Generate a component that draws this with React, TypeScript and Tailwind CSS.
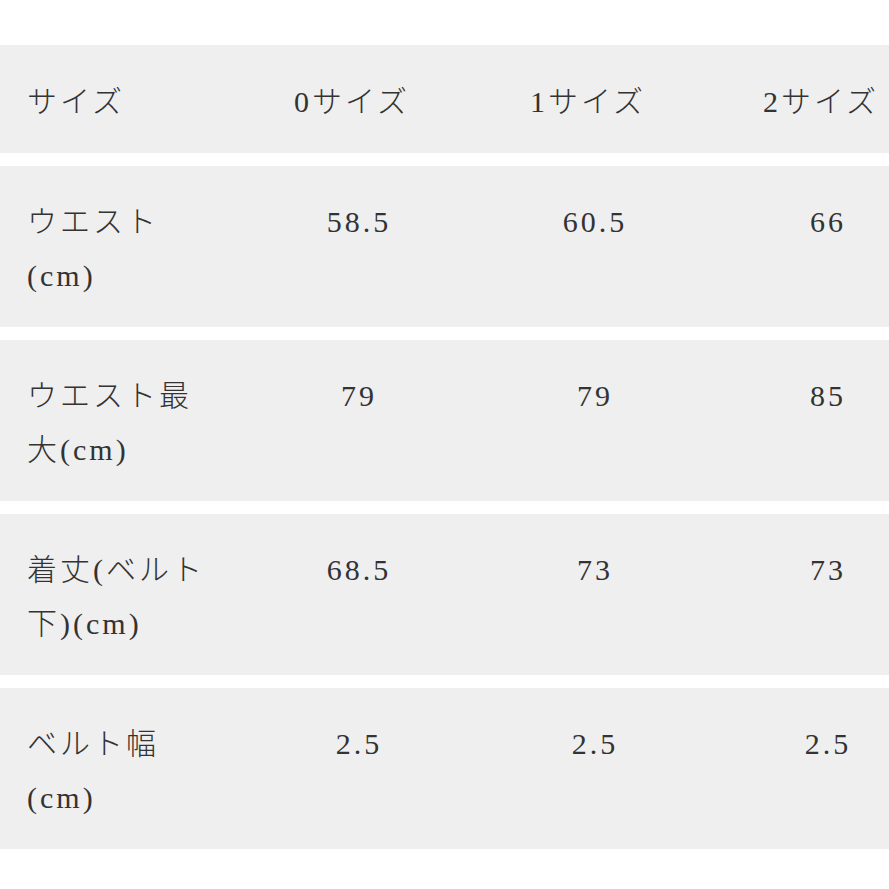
const rows: { label: string[]; values: string[] }[] = [
  { label: ['ウエスト', '(cm)'], values: ['58.5', '60.5', '66'] },
  { label: ['ウエスト最', '大(cm)'], values: ['79', '79', '85'] },
  { label: ['着丈(ベルト', '下)(cm)'], values: ['68.5', '73', '73'] },
  { label: ['ベルト幅', '(cm)'], values: ['2.5', '2.5', '2.5'] },
];

const font = {
  fontFamily: '"Liberation Serif", "Noto Sans CJK JP", serif',
};

export default function App() {
  return (
    <div className="w-[889px] h-[889px] overflow-hidden bg-white text-[#333333]" style={font}>
      <div className="pt-[45px] flex flex-col gap-[13px] w-[944px]">
        {/* Header */}
        <div className="grid grid-cols-[240px_238px_234px_232px] bg-[#efefef] pt-[30px] pb-[24px] text-[30px] leading-[54px] tracking-[3px] font-light">
          <div className="pl-[27px]">サイズ</div>
          <div className="text-center pr-[14px]">0サイズ</div>
          <div className="text-center pr-[14px]">1サイズ</div>
          <div className="text-center pr-[14px]">2サイズ</div>
        </div>

        {rows.map((row) => (
          <div
            key={row.label.join('')}
            className="grid grid-cols-[240px_238px_234px_232px] bg-[#efefef] pt-[29px] pb-[24px] text-[30px] leading-[54px] tracking-[3px] font-light"
          >
            <div className="pl-[27px]">
              {row.label.map((l) => (
                <div key={l}>{l}</div>
              ))}
            </div>
            {row.values.map((v, i) => (
              <div key={i} className="text-center">
                {v}
              </div>
            ))}
          </div>
        ))}
      </div>
    </div>
  );
}
